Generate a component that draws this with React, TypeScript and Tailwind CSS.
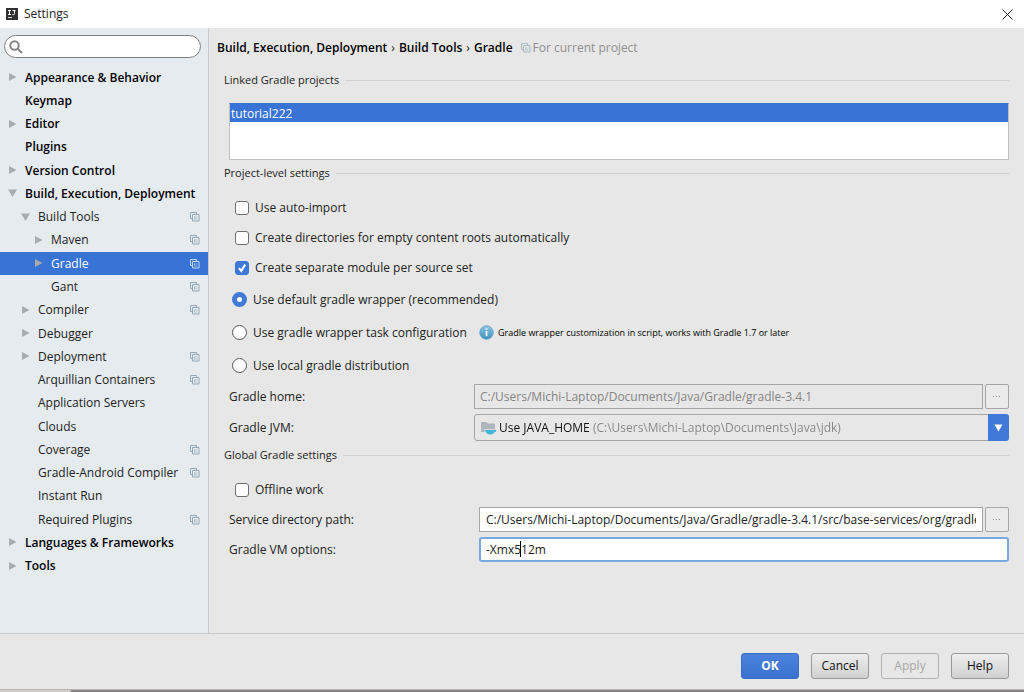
import type { ReactNode } from 'react';

type Arrow = 'right' | 'down';

type TreeRow = {
  label: string;
  level: 0 | 1 | 2;
  arrow?: Arrow;
  project?: boolean;
  selected?: boolean;
};

const rows: TreeRow[] = [
  { label: 'Appearance & Behavior', level: 0, arrow: 'right' },
  { label: 'Keymap', level: 0 },
  { label: 'Editor', level: 0, arrow: 'right' },
  { label: 'Plugins', level: 0 },
  { label: 'Version Control', level: 0, arrow: 'right' },
  { label: 'Build, Execution, Deployment', level: 0, arrow: 'down' },
  { label: 'Build Tools', level: 1, arrow: 'down', project: true },
  { label: 'Maven', level: 2, arrow: 'right', project: true },
  { label: 'Gradle', level: 2, arrow: 'right', project: true, selected: true },
  { label: 'Gant', level: 2, project: true },
  { label: 'Compiler', level: 1, arrow: 'right', project: true },
  { label: 'Debugger', level: 1, arrow: 'right' },
  { label: 'Deployment', level: 1, arrow: 'right', project: true },
  { label: 'Arquillian Containers', level: 1, project: true },
  { label: 'Application Servers', level: 1 },
  { label: 'Clouds', level: 1 },
  { label: 'Coverage', level: 1, project: true },
  { label: 'Gradle-Android Compiler', level: 1, project: true },
  { label: 'Instant Run', level: 1 },
  { label: 'Required Plugins', level: 1, project: true },
  { label: 'Languages & Frameworks', level: 0, arrow: 'right' },
  { label: 'Tools', level: 0, arrow: 'right' },
];

const indents = ['pl-2', 'pl-[21px]', 'pl-[34px]'];

function CopyIcon({ className }: { className: string }) {
  return (
    <svg viewBox="0 0 10 10" className={`size-2.5 shrink-0 ${className}`} fill="none" stroke="currentColor" aria-hidden="true">
      <path d="M2 6.500H.5v-6h6V2" />
      <path d="M2.500 2.500h6.500v6.500H2.500z" />
      <path d="M4.500 5h3M4.500 7h3M4.500 4.500v3" strokeOpacity=".6" />
    </svg>
  );
}

function TreeArrow({ arrow }: { arrow?: Arrow }) {
  return (
    <span className="flex w-[17px] shrink-0 items-center">
      {arrow && (
        <svg viewBox="0 0 9 9" className="size-[9px] fill-[#a9acaf]" aria-hidden="true">
          <path d={arrow === 'right' ? 'M1 0L8.500 4L1 8z' : 'M0 .5H9L4.500 8z'} />
        </svg>
      )}
    </span>
  );
}

function TreeItem({ row }: { row: TreeRow }) {
  return (
    <li className="flex flex-1">
      <a
        href="#"
        aria-current={row.selected ? 'page' : undefined}
        className={`flex min-h-[23px] flex-1 items-center pr-2 ${indents[row.level]} ${row.level === 0 ? 'font-semibold text-black' : ''} ${
          row.selected ? 'bg-[#3873d6] text-white' : ''
        }`}
      >
        <TreeArrow arrow={row.arrow} />
        <span className="flex-1 whitespace-nowrap">{row.label}</span>
        {row.project && <CopyIcon className={row.selected ? 'text-[#c3d8f5]' : 'text-[#93a8b6]'} />}
      </a>
    </li>
  );
}

function SectionTitle({ children }: { children: ReactNode }) {
  return (
    <h2 className="flex h-6 items-center gap-1.5 text-[11px]">
      {children}
      <span className="h-px flex-1 bg-[#d0d0d0]" />
    </h2>
  );
}

function Check({ label, checked }: { label: string; checked?: boolean }) {
  return (
    <label className="flex h-[30px] items-center gap-1.5 pl-1.5">
      <span className="grid">
        <input
          type="checkbox"
          defaultChecked={checked}
          className="peer col-start-1 row-start-1 size-3.5 appearance-none rounded-[3px] border border-[#6e6e6e] bg-white checked:border-[#3a74d4] checked:bg-[#3f7ad9]"
        />
        <svg
          viewBox="0 0 14 14"
          className="pointer-events-none col-start-1 row-start-1 hidden size-3.5 fill-none stroke-white stroke-2 peer-checked:block"
          aria-hidden="true"
        >
          <path d="M4 7.2L6.2 10L10.2 3.6" />
        </svg>
      </span>
      {label}
    </label>
  );
}

function Choice({ label, checked }: { label: string; checked?: boolean }) {
  return (
    <label className="flex h-[33px] items-center gap-1.5 pl-[3px]">
      <input
        type="radio"
        name="distribution"
        defaultChecked={checked}
        className="size-[15px] appearance-none rounded-full border border-[#555] bg-white checked:border-5 checked:border-[#3f7ad9]"
      />
      {label}
    </label>
  );
}

function InfoIcon() {
  return (
    <svg viewBox="0 0 15 15" className="size-[15px]" aria-hidden="true">
      <defs>
        <linearGradient id="info" x1="0" y1="0" x2="0" y2="1">
          <stop offset="0" stopColor="#8fc4e2" />
          <stop offset="1" stopColor="#3d8fc0" />
        </linearGradient>
      </defs>
      <circle cx="7.500" cy="7.500" r="6.800" fill="url(#info)" stroke="#5a9cc2" strokeWidth=".7" />
      <path d="M6.700 3.200h1.700v1.600H6.700zM6.700 6h1.700v5.200H6.700z" fill="#fff" />
    </svg>
  );
}

function FolderIcon() {
  return (
    <svg viewBox="0 0 16 14" className="h-3.5 w-4 shrink-0" aria-hidden="true">
      <path d="M0 1h5.500l1.300 1.500H14V11H0z" fill="#aeb6bd" />
      <path d="M3 8h12.500v2.500h-2C13 12.500 11.500 13.500 9 13.500S3.500 12 3 8z" fill="#d5dadd" />
      <path d="M4 9h11v2h-1.500c-.8 1.500-2 2.500-4.200 2.500S5 12 4 9z" fill="#40b6d8" />
    </svg>
  );
}

function BrowseButton({ label }: { label: string }) {
  return (
    <button
      type="button"
      aria-label={label}
      className="flex h-[25px] w-6 shrink-0 items-center justify-center rounded-xs border border-[#a6a6a6] bg-[#ebebeb]"
    >
      <svg viewBox="0 0 8 2" className="h-0.5 w-2 fill-[#8a8a8a]" aria-hidden="true">
        <path d="M0 0h1v1H0zM3 0h1v1H3zM6 0h1v1H6z" />
      </svg>
    </button>
  );
}

const footerButton = 'h-[26px] w-[58px] rounded-[3px] border pt-px leading-none';

export default function App() {
  return (
    <div className="flex min-h-screen flex-col bg-[#e7e7e7] font-['Open_Sans','Noto_Sans',sans-serif] text-[12px] leading-4 text-[#222]">
      <header className="flex h-7 items-center gap-1.5 bg-white pr-[11px] pl-1.5">
        <svg viewBox="0 0 12 12" className="size-3" aria-hidden="true">
          <path d="M0 0h12v12H0z" fill="#303030" />
          <path d="M2 2.500h3M3.500 2.500v4M2 6.500h3M6.500 2.500h3M8.500 2.500v3.200q0 .9-1 .9h-1.200" fill="none" stroke="#fff" />
          <path d="M2 9.500h4" stroke="#ddd" />
        </svg>
        <h1 className="flex-1">Settings</h1>
        <button type="button" aria-label="Close">
          <svg viewBox="0 0 11 11" className="size-[11px] fill-none stroke-[#222]" aria-hidden="true">
            <path d="M.5.5l10 10M10.500.5l-10 10" />
          </svg>
        </button>
      </header>

      <div className="flex flex-1">
        <aside className="flex w-[209px] shrink-0 flex-col border-r border-[#c8ccd0] bg-[#e6ebf0] pb-[55px]">
          <div className="px-1 pt-[7px] pb-2">
            <label className="flex h-[23px] w-[197px] items-center gap-1 rounded-full border border-[#7f7f7f] bg-white px-1">
              <svg viewBox="0 0 14 14" className="size-3.5 shrink-0 fill-none stroke-[#858585] stroke-2" aria-hidden="true">
                <circle cx="5.500" cy="5.500" r="4.200" />
                <path d="M8.700 8.700L13 13" />
              </svg>
              <input type="search" aria-label="Search settings" className="min-w-0 flex-1 bg-transparent outline-none" />
            </label>
          </div>
          <ul className="flex flex-1 flex-col">
            {rows.map((row) => (
              <TreeItem key={row.label} row={row} />
            ))}
          </ul>
        </aside>

        <main className="min-w-0 flex-1 pr-[15px] pl-2">
          <nav aria-label="Breadcrumb" className="flex h-10 items-center gap-1 whitespace-nowrap">
            <span className="font-semibold text-black">Build, Execution, Deployment</span>
            <span>›</span>
            <span className="font-semibold text-black">Build Tools</span>
            <span>›</span>
            <span className="font-semibold text-black">Gradle</span>
            <span className="flex items-center gap-0.5 pl-1 text-[#909090]">
              <CopyIcon className="text-[#a9bac2]" />
              For current project
            </span>
          </nav>

          <div className="pl-[7px]">
            <SectionTitle>Linked Gradle projects</SectionTitle>
            <ul className="mt-[11px] ml-[5px] h-[57px] border border-t-[#3873d6] border-[#c0c0c0] bg-white">
              <li className="h-[18px] bg-[#3873d6] pt-0.5 pl-px text-white">tutorial222</li>
            </ul>

            <div className="mt-px">
              <SectionTitle>Project-level settings</SectionTitle>
            </div>
            <div className="pt-2 pl-[5px]">
              <Check label="Use auto-import" />
              <Check label="Create directories for empty content roots automatically" />
              <Check label="Create separate module per source set" checked />
              <Choice label="Use default gradle wrapper (recommended)" checked />
              <div className="flex items-center">
                <div className="w-[250px]">
                  <Choice label="Use gradle wrapper task configuration" />
                </div>
                <div className="flex items-center gap-1 text-[9px] font-medium text-black">
                  <InfoIcon />
                  Gradle wrapper customization in script, works with Gradle 1.7 or later
                </div>
              </div>
              <Choice label="Use local gradle distribution" />

              <div className="mt-0.5 flex items-center">
                <label htmlFor="home" className="w-[245px]">
                  Gradle home:
                </label>
                <div className="flex min-w-0 flex-1 gap-0.5">
                  <input
                    id="home"
                    disabled
                    defaultValue="C:/Users/Michi-Laptop/Documents/Java/Gradle/gradle-3.4.1"
                    className="h-[25px] min-w-0 flex-1 border border-[#a6a6a6] px-[5px] text-[#858585]"
                  />
                  <BrowseButton label="Browse for Gradle home" />
                </div>
              </div>
              <div className="mt-[5px] flex items-center">
                <label htmlFor="jvm" className="w-[245px]">
                  Gradle JVM:
                </label>
                <div className="flex h-[27px] min-w-0 flex-1 items-center rounded-[3px] border border-[#a6a6a6] pl-1.5">
                  <FolderIcon />
                  <select
                    id="jvm"
                    className="h-full min-w-0 flex-1 appearance-none bg-[linear-gradient(to_right,#111_92px,#858585_92px)] bg-clip-text pl-0.5 text-transparent outline-none"
                  >
                    <option>Use JAVA_HOME (C:\Users\Michi-Laptop\Documents\Java\jdk)</option>
                  </select>
                  <span className="-my-px -mr-px flex h-[27px] w-[21px] items-center justify-center rounded-r-[3px] bg-[#4079d8]">
                    <svg viewBox="0 0 9 8" className="h-2 w-[9px] fill-white" aria-hidden="true">
                      <path d="M.5.5h8L4.500 7.500z" />
                    </svg>
                  </span>
                </div>
              </div>
            </div>

            <div className="mt-0.5">
              <SectionTitle>Global Gradle settings</SectionTitle>
            </div>
            <div className="pt-2 pl-[5px]">
              <Check label="Offline work" />
              <div className="mt-0.5 flex items-center">
                <label htmlFor="service" className="w-[250px]">
                  Service directory path:
                </label>
                <div className="flex min-w-0 flex-1 gap-0.5">
                  <input
                    id="service"
                    defaultValue="C:/Users/Michi-Laptop/Documents/Java/Gradle/gradle-3.4.1/src/base-services/org/gradle/internal"
                    className="h-[25px] min-w-0 flex-1 border border-[#a6a6a6] bg-white px-1.5"
                  />
                  <BrowseButton label="Browse for service directory" />
                </div>
              </div>
              <div className="mt-[5px] flex items-center">
                <label htmlFor="vm" className="w-[250px]">
                  Gradle VM options:
                </label>
                <div className="relative flex min-w-0 flex-1">
                  <input
                    id="vm"
                    defaultValue="-Xmx512m"
                    className="h-[25px] min-w-0 flex-1 rounded-[3px] border-2 border-[#78a8df] bg-white px-[5px] outline-none"
                  />
                  <span className="absolute top-1 left-[41px] h-4 w-px bg-black" />
                </div>
              </div>
            </div>
          </div>
        </main>
      </div>

      <footer className="flex h-14 items-center justify-end gap-3 border-t border-[#cacaca] pt-2 pr-[15px]">
        <button type="button" className={`${footerButton} border-[#3a6fc8] bg-linear-to-b from-[#4a82de] to-[#3b72cf] font-bold text-white`}>
          OK
        </button>
        <button type="button" className={`${footerButton} border-[#999] bg-linear-to-b from-[#eee] to-[#d0d0d0] text-[#111]`}>
          Cancel
        </button>
        <button type="button" disabled className={`${footerButton} border-[#b0b0b0] text-[#a8a8a8]`}>
          Apply
        </button>
        <button type="button" className={`${footerButton} border-[#999] bg-linear-to-b from-[#eee] to-[#d0d0d0] text-[#111]`}>
          Help
        </button>
      </footer>
      <div className="flex h-[3px] border-t border-[#b5b5b5]">
        <span className="w-[71px] bg-[#cfcccc]" />
        <span className="flex-1 bg-[#858183]" />
      </div>
    </div>
  );
}
